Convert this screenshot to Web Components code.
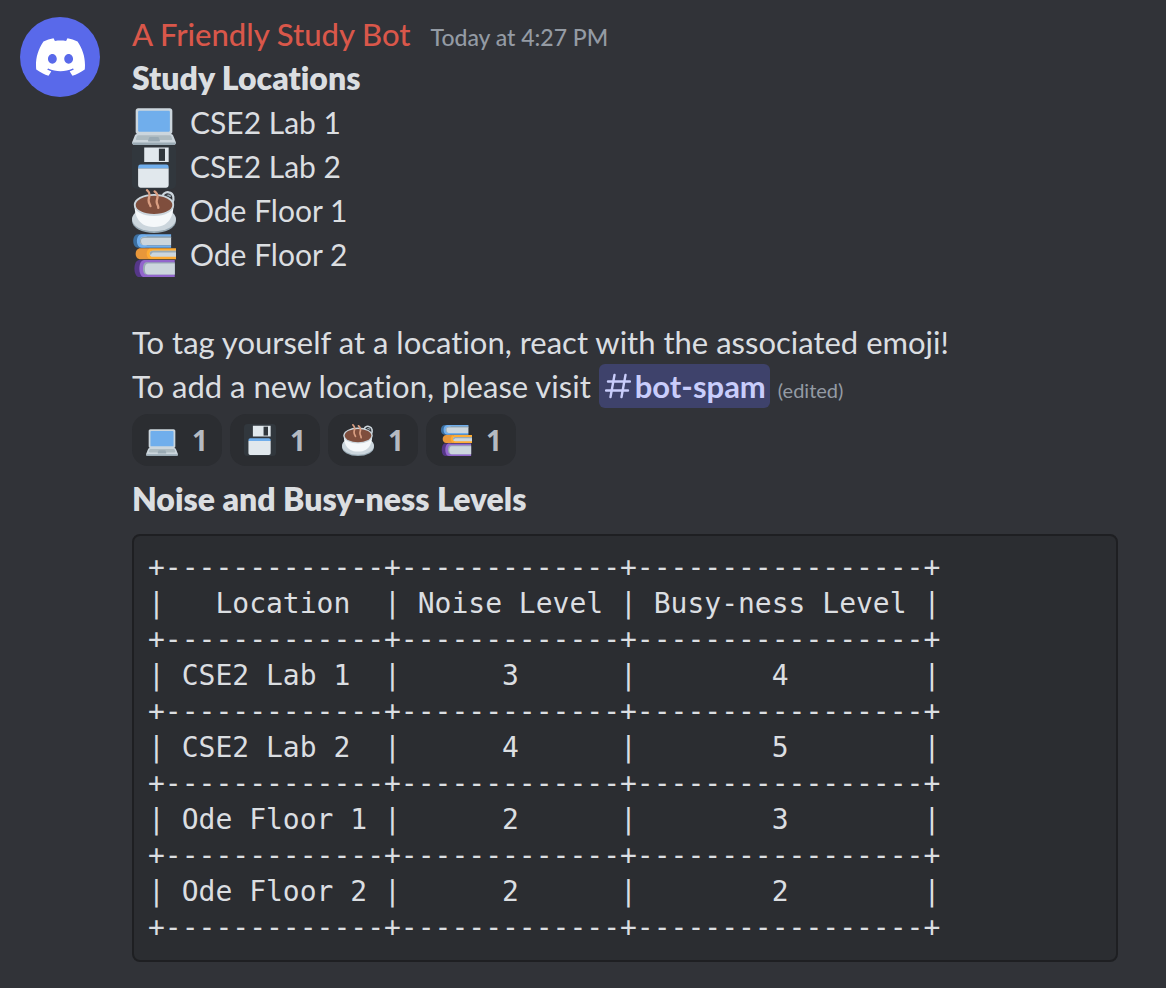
<!DOCTYPE html>
<html lang="en">
<head>
<meta charset="utf-8">
<title>Study bot</title>
<style>
  html { background: #313338; }
  body { margin: 0; color: #dbdee1; font: 400 31px/44px Lato, "Noto Sans", sans-serif; font-variant-ligatures: none; }
</style>
</head>
<body>
<chat-message>
  <bot-avatar slot="avatar"></bot-avatar>
  <message-header slot="header" time="Today at 4:27 PM">A Friendly Study Bot</message-header>
  <section-title>Study Locations</section-title>
  <location-list>
    <location-item emoji="laptop">CSE2 Lab 1</location-item>
    <location-item emoji="floppy">CSE2 Lab 2</location-item>
    <location-item emoji="coffee">Ode Floor 1</location-item>
    <location-item emoji="books">Ode Floor 2</location-item>
  </location-list>
  <message-text>To tag yourself at a location, react with the associated emoji!<br>To add a new location, please visit <channel-mention>bot-spam</channel-mention><edited-mark>(edited)</edited-mark></message-text>
  <reaction-bar>
    <reaction-pill emoji="laptop">1</reaction-pill>
    <reaction-pill emoji="floppy">1</reaction-pill>
    <reaction-pill emoji="coffee">1</reaction-pill>
    <reaction-pill emoji="books">1</reaction-pill>
  </reaction-bar>
  <section-title>Noise and Busy-ness Levels</section-title>
  <code-block>+-------------+-------------+-----------------+
|   Location  | Noise Level | Busy-ness Level |
+-------------+-------------+-----------------+
| CSE2 Lab 1  |      3      |        4        |
+-------------+-------------+-----------------+
| CSE2 Lab 2  |      4      |        5        |
+-------------+-------------+-----------------+
| Ode Floor 1 |      2      |        3        |
+-------------+-------------+-----------------+
| Ode Floor 2 |      2      |        2        |
+-------------+-------------+-----------------+</code-block>
</chat-message>

<script>
const define = (name, markup, setup) => {
  const template = document.createElement('template');
  template.innerHTML = markup;
  customElements.define(name, class extends HTMLElement {
    constructor() {
      super();
      this.attachShadow({ mode: 'open' }).append(template.content.cloneNode(true));
    }
    connectedCallback() { if (setup) setup(this, this.shadowRoot); }
  });
};

const EMOJI = {
  laptop: `
    <path fill="#CCD6DD" d="M34 29.1c-.4-1-.9-2-2-2h-1c1.100 0 2-.9 2-2V8c0-1.100-.9-2-2-2H5c-1.100 0-2 .9-2 2v17.100c0 1.100.9 2 2 2H4c-1.100 0-1.670 1-2 2L0 34c0 1.100.9 2 2 2h32c1.100 0 2-.9 2-2z"/>
    <path fill="#9AAAB4" d="M0 34l.2.8C.5 35.500 1.200 36 2 36h32c1.100 0 2-.9 2-2z"/>
    <path fill="#70AEEC" d="M31 24.100c0 .55-.45 1-1 1H6c-.55 0-1-.45-1-1V9c0-.55.45-1 1-1h24c.55 0 1 .45 1 1z"/>
    <path fill="#AEBBC1" d="M32.900 31l-.75-2.200c-.24-.46-.64-.8-1.200-.8H5.100c-.55 0-.9.34-1.150.8L3.200 31c-.22.56.45 1 1 1h27.700c.55 0 1.220-.44 1-1z"/>
    <path fill="#9AAAB4" d="M22.400 33.100h-8.800c-.3 0-.5-.2-.5-.5l.9-2.600c.1-.3.400-.5.7-.5h6.600c.3 0 .6.2.7.5l.9 2.600c.1.300-.2.500-.5.500z"/>`,
  floppy: `
    <path fill="#31373D" d="M4 0h28a4 4 0 0 1 4 4v28a4 4 0 0 1-4 4H4a4 4 0 0 1-4-4V4a4 4 0 0 1 4-4z"/>
    <path fill="#E1E8ED" d="M10 2h20v12H10zM5 19h25v14a2 2 0 0 1-2 2H7a2 2 0 0 1-2-2z"/>
    <path fill="#31373D" d="M22 3h5v10h-5z"/>
    <path fill="#70AEEC" d="M7 16h21a2 2 0 0 1 2 2v1H5v-1a2 2 0 0 1 2-2z"/>`,
  coffee: `
    <ellipse cx="18" cy="26" rx="18" ry="10" fill="#99AAB5"/>
    <ellipse cx="18" cy="24.600" rx="18" ry="10" fill="#CCD6DD"/>
    <path fill="#F5F8FA" d="M18 31C3 31 2 18 2 12h32c0 6-1 19-16 19z"/>
    <path fill="none" stroke="#CCD6DD" stroke-width="1.800" d="M25 5.500c1-3 4-3.300 6-2.500 3 1 3.800 5 2 8.500"/>
    <path fill="#99AAB5" d="M28 5c1-1 3-.6 3.800.3.300.8 0 1.500-.8 1.200z"/>
    <ellipse cx="18" cy="13" rx="16.500" ry="9" fill="#CCD6DD"/>
    <ellipse cx="18" cy="13" rx="15" ry="7.500" fill="#7F4E3D"/>
    <path fill="none" stroke="#D99E82" stroke-width="1.900" stroke-linecap="round" d="M12.300 1c4 3.500 1 5.500 1.300 8.500.1 2.500 1.200 3 1.500 4.500M18.500 2c4.500 3.500 1.500 5.500 1.700 8.500.1 2.500 1.500 3 1.300 5"/>`,
  books: `
    <path fill="#3B6E9F" d="M5 1h6v11H5C2.500 12 1 9.500 1 6.500S2.500 1 5 1z"/>
    <path fill="#70AEEC" d="M8 1h24v2H12v7h20v2H8c-2.500 0-4-2.500-4-5.500S5.500 1 8 1z"/>
    <path fill="#CCD6DD" d="M10 3h22v7H10C7.500 10 6.500 8.500 6.500 6.500S7.500 3 10 3z"/>
    <path fill="#99AAB5" d="M10 3h22v1H10c-2 0-2.600 1-2.600 2.500S8 9 9 10C7 9.500 6.500 8 6.500 6.500 6.500 4.500 8 3 10 3z"/>
    <path fill="#E8973A" d="M7 12.500h8v9H7c-2.500 0-4-2-4-4.500s1.500-4.500 4-4.500z"/>
    <path fill="#FFAC33" d="M16 12.500h20v9H16c-2.500 0-4-2-4-4.500s1.500-4.500 4-4.500z"/>
    <path fill="#CCD6DD" d="M17 14.500h19v5H17c-1.700 0-2.500-1-2.500-2.500s.8-2.500 2.500-2.500z"/>
    <path fill="#99AAB5" d="M17 14.500h19v1.500H18c-1.500 0-2 .5-2.500 2-1.500-1-1-3.500 1.500-3.500z"/>
    <path fill="#553788" d="M6 22h6v14H6c-2.600 0-4-3-4-7s1.400-7 4-7z"/>
    <path fill="#9266CC" d="M10 22h25v14H10c-2.500 0-4-3-4-7s1.500-7 4-7z"/>
    <path fill="#99AAB5" d="M12 24h23v10H12c-2 0-3-2-3-5s1-5 3-5z"/>
    <path fill="#CCD6DD" d="M13 25h22v9H13c-1.700 0-2.500-2-2.500-4.500S11.300 25 13 25z"/>`
};

define('emoji-icon', `
  <style>
    :host { display: block; flex: none; width: var(--emoji-size, 44px); height: var(--emoji-size, 44px); }
    svg { display: block; width: 100%; height: 100%; }
  </style>
  <svg viewBox="0 0 36 36" aria-hidden="true"></svg>`,
  (el, root) => { root.querySelector('svg').innerHTML = EMOJI[el.getAttribute('name')] || ''; });

define('bot-avatar', `
  <style>
    :host { display: grid; place-items: center; width: 80px; height: 80px; border-radius: 50%; background: #5969ea; }
    svg { display: block; width: 49px; height: 38px; }
  </style>
  <svg viewBox="0 0 71 55" role="img" aria-label="Discord"><path fill="#fff" d="M60.1045 4.8978C55.5792 2.8214 50.7265 1.2916 45.6527 0.41542C45.5603 0.39851 45.468 0.440769 45.4204 0.525289C44.7963 1.6353 44.105 3.0834 43.6209 4.2216C38.1637 3.4046 32.7345 3.4046 27.3892 4.2216C26.905 3.0581 26.1886 1.6353 25.5617 0.525289C25.5141 0.443589 25.4218 0.40133 25.3294 0.41542C20.2584 1.2888 15.4057 2.8186 10.8776 4.8978C10.8384 4.9147 10.8048 4.9429 10.7825 4.9795C1.57795 18.7309 -0.943561 32.1443 0.293408 45.3914C0.299005 45.4562 0.335386 45.5182 0.385761 45.5576C6.45866 50.0174 12.3413 52.7249 18.1147 54.5195C18.2071 54.5477 18.305 54.5139 18.3638 54.4378C19.7295 52.5728 20.9469 50.6063 21.9907 48.5383C22.0523 48.4172 21.9935 48.2735 21.8676 48.2256C19.9366 47.4931 18.0979 46.6 16.3292 45.5858C16.1893 45.5041 16.1781 45.304 16.3068 45.2082C16.679 44.9293 17.0513 44.6391 17.4067 44.3461C17.471 44.2926 17.5606 44.2813 17.6362 44.3151C29.2558 49.6202 41.8354 49.6202 53.3179 44.3151C53.3935 44.2785 53.4831 44.2898 53.5502 44.3433C53.9057 44.6363 54.2779 44.9293 54.6529 45.2082C54.7816 45.304 54.7732 45.5041 54.6333 45.5858C52.8646 46.6197 51.0259 47.4931 49.0921 48.2228C48.9662 48.2707 48.9102 48.4172 48.9718 48.5383C50.038 50.6034 51.2554 52.5699 52.5959 54.435C52.6519 54.5139 52.7526 54.5477 52.845 54.5195C58.6464 52.7249 64.529 50.0174 70.6019 45.5576C70.6551 45.5182 70.6887 45.459 70.6943 45.3942C72.1747 30.0791 68.2147 16.7757 60.1968 4.9823C60.1772 4.9429 60.1437 4.9147 60.1045 4.8978ZM23.7259 37.3253C20.2276 37.3253 17.3451 34.1136 17.3451 30.1693C17.3451 26.225 20.1717 23.0133 23.7259 23.0133C27.308 23.0133 30.1626 26.2532 30.1066 30.1693C30.1066 34.1136 27.28 37.3253 23.7259 37.3253ZM47.3178 37.3253C43.8196 37.3253 40.937 34.1136 40.937 30.1693C40.937 26.225 43.7636 23.0133 47.3178 23.0133C50.9 23.0133 53.7545 26.2532 53.6986 30.1693C53.6986 34.1136 50.9 37.3253 47.3178 37.3253Z"/></svg>`);

define('message-header', `
  <style>
    :host { display: flex; align-items: baseline; gap: 20px; }
    .name { color: #d9574a; font-weight: 500; }
    time { color: #949ba4; font-size: 23px; line-height: 28px; font-weight: 500; }
  </style>
  <span class="name"><slot></slot></span><time></time>`,
  (el, root) => { root.querySelector('time').textContent = el.getAttribute('time'); });

define('section-title', `
  <style>
    :host { display: block; }
    strong { display: block; font-size: 32px; font-weight: 800; }
  </style>
  <strong><slot></slot></strong>`);

define('location-list', `
  <style>:host { display: block; margin-bottom: 44px; font-size: 30px; }</style>
  <slot></slot>`);

define('location-item', `
  <style>
    :host { display: flex; gap: 14px; height: 44px; }
    .icon { padding-top: 1px; }
  </style>
  <span class="icon"><emoji-icon></emoji-icon></span><span><slot></slot></span>`,
  (el, root) => {
    const icon = document.createElement('emoji-icon');
    icon.setAttribute('name', el.getAttribute('emoji'));
    root.querySelector('emoji-icon').replaceWith(icon);
  });

define('message-text', `
  <style>:host { display: block; }</style>
  <slot></slot>`);

define('channel-mention', `
  <style>
    :host { display: inline-block; vertical-align: top; }
    a { display: flex; align-items: center; gap: 4px; padding: 0 4px 0 6px; border-radius: 6px;
        background: #3e426b; color: #c9cdfb; font-weight: 700; text-decoration: none; }
    svg { display: block; width: 26px; height: 26px; }
  </style>
  <a href="#bot-spam"><svg viewBox="0 0 26 26" aria-label="Channel" role="img" fill="none" stroke="currentColor" stroke-width="2.400" stroke-linecap="round"><path d="M9.500 2L5.500 24M20.500 2L16.500 24M3 8.500H25M1 17.500H23"/></svg><span><slot></slot></span></a>`);

define('edited-mark', `
  <style>:host { display: inline-block; margin-left: 8px; color: #949ba4; font-size: 20px; line-height: 24px; }</style>
  <slot></slot>`);

define('reaction-bar', `
  <style>:host { display: flex; flex-wrap: wrap; gap: 8px; margin: 6px 0 11px; }</style>
  <slot></slot>`);

define('reaction-pill', `
  <style>
    :host { display: block; --emoji-size: 32px; }
    button { display: flex; align-items: center; gap: 14px; height: 52px; margin: 0; padding: 0 14px;
      border: 0; border-radius: 16px; background: #2b2d31; color: #b5bac1;
      font: 700 28px/32px "Noto Sans", sans-serif; cursor: pointer; }
  </style>
  <button type="button"><emoji-icon></emoji-icon><span><slot></slot></span></button>`,
  (el, root) => {
    const icon = document.createElement('emoji-icon');
    icon.setAttribute('name', el.getAttribute('emoji'));
    root.querySelector('emoji-icon').replaceWith(icon);
  });

define('code-block', `
  <style>
    :host { display: block; margin-top: 13px; }
    pre { margin: 0; padding: 14px; border: 2px solid #1e1f22; border-radius: 8px; background: #2b2d31;
      font: 400 28px/36px "DejaVu Sans Mono", monospace; overflow: hidden; }
    code { font: inherit; }
  </style>
  <pre><code><slot></slot></code></pre>`);

define('chat-message', `
  <style>
    :host { display: grid; grid-template-columns: 80px minmax(0, 1fr); gap: 32px; padding: 12px 48px 26px 20px; }
    .avatar { padding-top: 5px; }
  </style>
  <div class="avatar"><slot name="avatar"></slot></div>
  <article><slot name="header"></slot><slot></slot></article>`);
</script>
</body>
</html>
